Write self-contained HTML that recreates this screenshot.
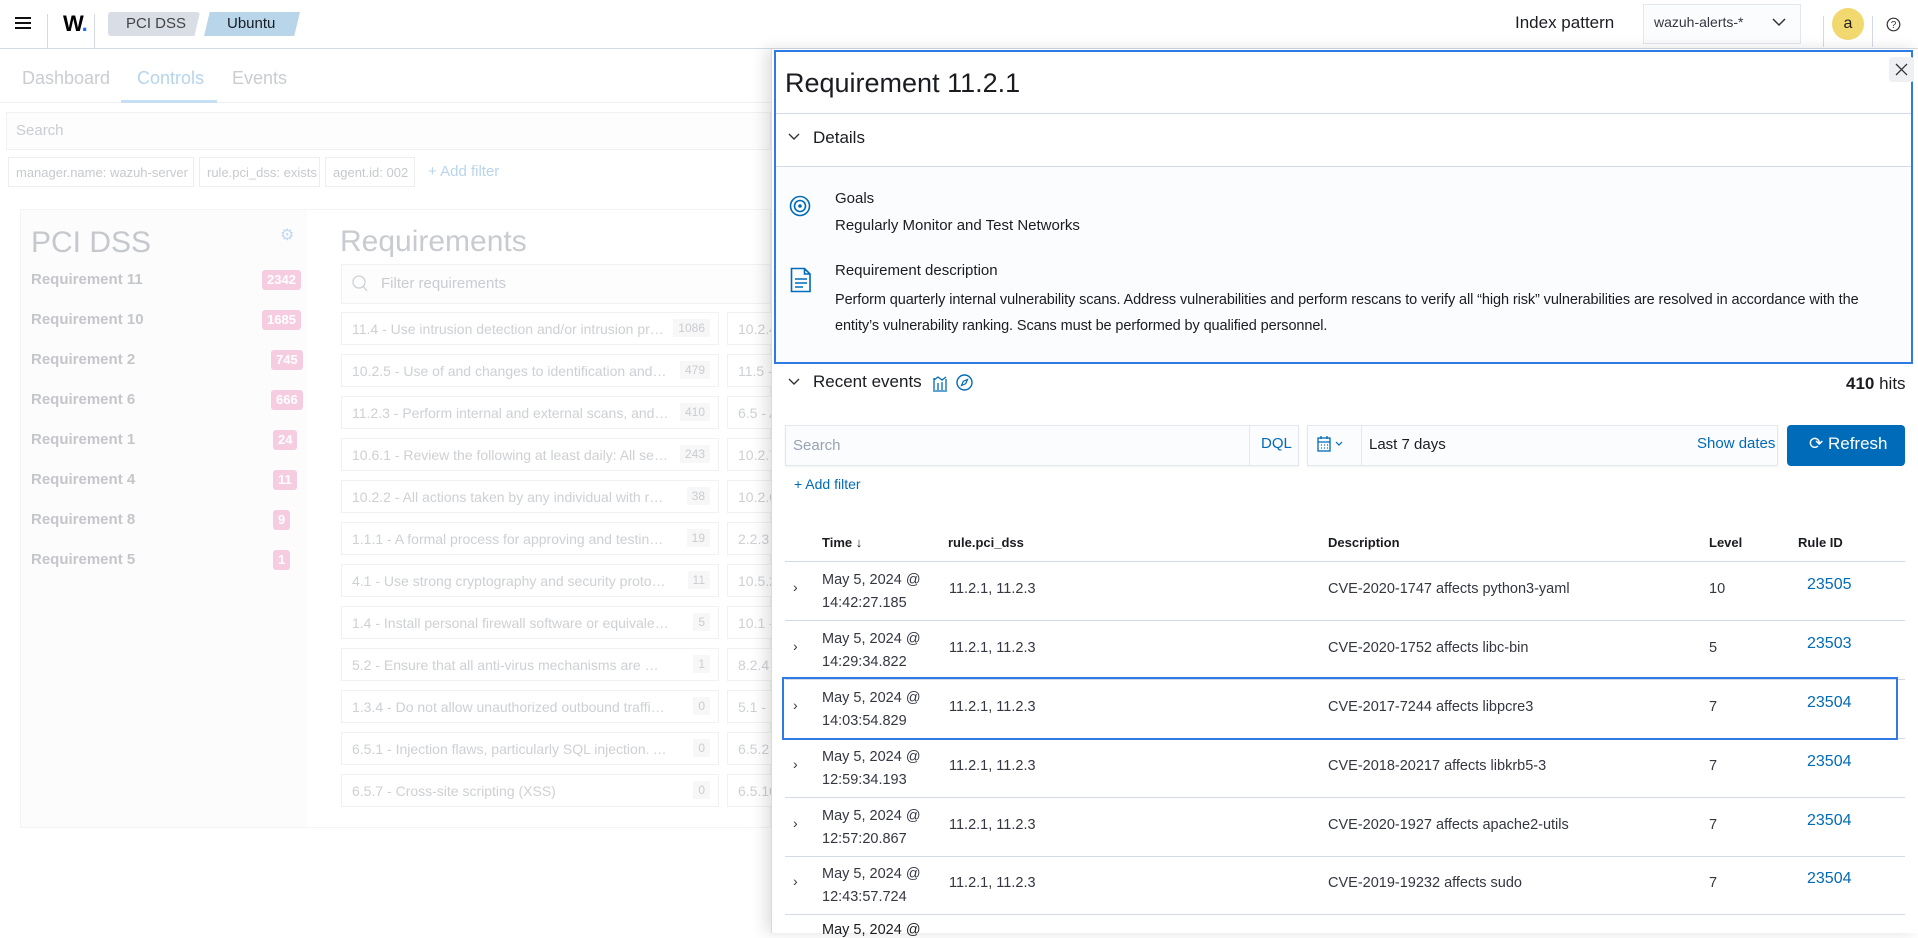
<!DOCTYPE html>
<html><head><meta charset="utf-8"><style>
*{box-sizing:border-box;margin:0;padding:0}
body{width:1918px;height:933px;overflow:hidden;background:#fff;font-family:"Liberation Sans",sans-serif;position:relative;color:#343741}
.a{position:absolute;white-space:nowrap}
.f{color:#c9ccd1}
.pill{position:absolute;border:1px solid #eceef1;height:30px;top:157px;font-size:13px;color:#c6c9ce;padding:7px 7px;background:#fff;white-space:nowrap;overflow:hidden}
.req{position:absolute;left:31px;font-size:15px;font-weight:bold;color:#c4c6ca}
.bdg{position:absolute;right:0;background:#f6cde0;color:#fff;font-size:13px;height:20px;padding:2px 5px;border-radius:3px}
.g{position:absolute;height:33px;border:1px solid #f0f1f3;font-size:14px;color:#cdd0d4;padding:8px 48px 8px 10px;overflow:hidden;background:#fff;white-space:nowrap;text-overflow:ellipsis}
.g b{position:absolute;right:8px;top:6px;font-weight:normal;background:#f7f7f8;font-size:12px;padding:2px 5px;color:#c9ccd0}
.g2{padding-right:4px;text-overflow:clip}
.row{position:absolute;left:785px;width:1120px;height:59px;border-bottom:1px solid #d3dae6;font-size:14.5px;color:#343741}
.row span{position:absolute}
.row .t{left:37px;top:7px;line-height:23px;white-space:normal;width:110px}
.row .c{left:164px;top:19px}
.row .d{left:543px;top:19px}
.row .l{left:924px;top:19px}
.row .r{left:1022px;top:14px;color:#006bb8;font-size:16px}
.row .x{left:8px;top:17px;color:#343741;font-size:14px}
</style></head><body>
<!-- header -->
<div class="a" style="left:0;top:0;width:1918px;height:49px;border-bottom:1px solid #d3dae6"></div>
<div class="a" style="left:15px;top:17px;width:16px;height:2px;background:#111;box-shadow:0 5px 0 #111,0 10px 0 #111"></div>
<div class="a" style="left:47px;top:14px;width:1px;height:35px;background:#d3dae6"></div>
<div class="a" style="left:63px;top:11px;font-size:22px;font-weight:bold;color:#000;letter-spacing:-1px">W<span style="color:#1e6df6">.</span></div>
<div class="a" style="left:94px;top:14px;width:1px;height:35px;background:#d3dae6"></div>
<div class="a" style="left:108px;top:12px;width:92px;height:24px;background:#d9dde6;clip-path:polygon(0 0,100% 0,94% 100%,0 100%);border-radius:3px"></div>
<div class="a" style="left:126px;top:15px;font-size:15px;color:#444">PCI DSS</div>
<div class="a" style="left:204px;top:12px;width:96px;height:24px;background:#b8d5ea;clip-path:polygon(6% 0,100% 0,94% 100%,0 100%)"></div>
<div class="a" style="left:227px;top:15px;font-size:15px;color:#1a1c21">Ubuntu</div>
<div class="a" style="left:1515px;top:13px;font-size:17px;color:#1a1c21">Index pattern</div>
<div class="a" style="left:1643px;top:4px;width:158px;height:40px;border:1px solid #e3e7ee;background:#fbfcfd"></div>
<div class="a" style="left:1654px;top:14px;font-size:14px;color:#343741">wazuh-alerts-*</div>
<svg class="a" style="left:1772px;top:17px" width="14" height="10"><path d="M1 2l6 6 6-6" stroke="#333" fill="none" stroke-width="1.5"/></svg>
<div class="a" style="left:1823px;top:16px;width:1px;height:31px;background:#d3dae6"></div>
<div class="a" style="left:1832px;top:8px;width:32px;height:32px;border-radius:50%;background:#f1d86f;text-align:center;font-size:16px;line-height:31px;color:#222">a</div>
<div class="a" style="left:1872px;top:16px;width:1px;height:31px;background:#d3dae6"></div>
<svg class="a" style="left:1886px;top:17px" width="15" height="15"><circle cx="7.5" cy="7.5" r="6.3" stroke="#333" stroke-width="1.2" fill="none"/><text x="7.5" y="11" font-size="10" text-anchor="middle" fill="#333" font-family="Liberation Sans">?</text></svg>

<!-- faded left -->
<div class="a f" style="left:22px;top:68px;font-size:18px">Dashboard</div>
<div class="a" style="left:137px;top:68px;font-size:18px;color:#b5d4ee">Controls</div>
<div class="a f" style="left:232px;top:68px;font-size:18px">Events</div>
<div class="a" style="left:0;top:102px;width:771px;height:1px;background:#f0f1f3"></div>
<div class="a" style="left:121px;top:100px;width:96px;height:3px;background:#c8def2"></div>
<div class="a" style="left:6px;top:112px;width:765px;height:38px;border:1px solid #f0f1f3;background:#fdfdfe"></div>
<div class="a f" style="left:16px;top:122px;font-size:15px">Search</div>
<div class="pill" style="left:8px;width:186px">manager.name: wazuh-server</div>
<div class="pill" style="left:199px;width:121px">rule.pci_dss: exists</div>
<div class="pill" style="left:325px;width:90px">agent.id: 002</div>
<div class="a" style="left:428px;top:163px;font-size:15px;color:#b9d4ee">+ Add filter</div>
<div class="a" style="left:20px;top:209px;width:751px;height:619px;border:1px solid #f3f4f6;background:#fff"></div>
<div class="a" style="left:21px;top:210px;width:286px;height:617px;background:#fcfcfd"></div>
<div class="a f" style="left:31px;top:226px;font-size:30px;color:#c5c8cc">PCI DSS</div>
<div class="a" style="left:280px;top:225px;font-size:16px;color:#c1d9ef">⚙</div>
<div style="position:absolute;left:0;top:0;width:298px">
<div class="req" style="top:271px">Requirement 11<span class="bdg" style="left:231px;right:auto;top:-1px">2342</span></div>
<div class="req" style="top:311px">Requirement 10<span class="bdg" style="left:231px;right:auto;top:-1px">1685</span></div>
<div class="req" style="top:351px">Requirement 2<span class="bdg" style="left:240px;right:auto;top:-1px">745</span></div>
<div class="req" style="top:391px">Requirement 6<span class="bdg" style="left:240px;right:auto;top:-1px">666</span></div>
<div class="req" style="top:431px">Requirement 1<span class="bdg" style="left:242px;right:auto;top:-1px">24</span></div>
<div class="req" style="top:471px">Requirement 4<span class="bdg" style="left:242px;right:auto;top:-1px">11</span></div>
<div class="req" style="top:511px">Requirement 8<span class="bdg" style="left:242px;right:auto;top:-1px">9</span></div>
<div class="req" style="top:551px">Requirement 5<span class="bdg" style="left:242px;right:auto;top:-1px">1</span></div>
</div>
<div class="a" style="left:340px;top:225px;font-size:30px;color:#c8cbcf">Requirements</div>
<div class="a" style="left:341px;top:264px;width:430px;height:40px;border:1px solid #f0f1f3;background:#fdfdfe"></div>
<svg class="a" style="left:352px;top:275px" width="16" height="18"><circle cx="7" cy="7" r="6" stroke="#cdd0d4" stroke-width="1.3" fill="none"/><path d="M11 11l4 5" stroke="#cdd0d4" stroke-width="1.3"/></svg>
<div class="a f" style="left:381px;top:275px;font-size:15px">Filter requirements</div>
<div class="g" style="left:341px;top:312px;width:378px">11.4 - Use intrusion detection and/or intrusion prevention<b>1086</b></div>
<div class="g" style="left:341px;top:354px;width:378px">10.2.5 - Use of and changes to identification and auth<b>479</b></div>
<div class="g" style="left:341px;top:396px;width:378px">11.2.3 - Perform internal and external scans, and rescan<b>410</b></div>
<div class="g" style="left:341px;top:438px;width:378px">10.6.1 - Review the following at least daily: All security<b>243</b></div>
<div class="g" style="left:341px;top:480px;width:378px">10.2.2 - All actions taken by any individual with root or<b>38</b></div>
<div class="g" style="left:341px;top:522px;width:378px">1.1.1 - A formal process for approving and testing all net<b>19</b></div>
<div class="g" style="left:341px;top:564px;width:378px">4.1 - Use strong cryptography and security protocols to<b>11</b></div>
<div class="g" style="left:341px;top:606px;width:378px">1.4 - Install personal firewall software or equivalent func<b>5</b></div>
<div class="g" style="left:341px;top:648px;width:378px">5.2 - Ensure that all anti-virus mechanisms are maintained<b>1</b></div>
<div class="g" style="left:341px;top:690px;width:378px">1.3.4 - Do not allow unauthorized outbound traffic from<b>0</b></div>
<div class="g" style="left:341px;top:732px;width:378px">6.5.1 - Injection flaws, particularly SQL injection. Also<b>0</b></div>
<div class="g" style="left:341px;top:774px;width:378px">6.5.7 - Cross-site scripting (XSS)<b>0</b></div>
<div class="g g2" style="left:727px;top:312px;width:60px">10.2.4</div>
<div class="g g2" style="left:727px;top:354px;width:60px">11.5 -</div>
<div class="g g2" style="left:727px;top:396px;width:60px">6.5 - A</div>
<div class="g g2" style="left:727px;top:438px;width:60px">10.2.7</div>
<div class="g g2" style="left:727px;top:480px;width:60px">10.2.6</div>
<div class="g g2" style="left:727px;top:522px;width:60px">2.2.3</div>
<div class="g g2" style="left:727px;top:564px;width:60px">10.5.2</div>
<div class="g g2" style="left:727px;top:606px;width:60px">10.1 -</div>
<div class="g g2" style="left:727px;top:648px;width:60px">8.2.4</div>
<div class="g g2" style="left:727px;top:690px;width:60px">5.1 - D</div>
<div class="g g2" style="left:727px;top:732px;width:60px">6.5.2</div>
<div class="g g2" style="left:727px;top:774px;width:60px">6.5.10</div>

<!-- flyout -->
<div class="a" style="left:771px;top:49px;width:1147px;height:884px;background:#fff;border-left:1px solid #d3dae6;box-shadow:-6px 0 14px rgba(0,0,0,.12)"></div>
<div class="a" style="left:774px;top:50px;width:1139px;height:314px;border:2px solid #2f7ae5;background:#fbfcfe"></div>
<div class="a" style="left:776px;top:52px;width:1135px;height:61px;background:#fff"></div>
<div class="a" style="left:785px;top:68px;font-size:27px;color:#1a1c21">Requirement 11.2.1</div>
<div class="a" style="left:1889px;top:57px;width:25px;height:25px;background:#eef0f3;border-radius:3px"></div>
<svg class="a" style="left:1895px;top:63px" width="13" height="13"><path d="M1 1l11 11M12 1L1 12" stroke="#333" stroke-width="1.3"/></svg>
<div class="a" style="left:776px;top:113px;width:1135px;height:1px;background:#d3dae6"></div>
<div class="a" style="left:776px;top:114px;width:1135px;height:52px;background:#fff"></div>
<svg class="a" style="left:788px;top:133px" width="12" height="8"><path d="M1 1l5 5 5-5" stroke="#333" fill="none" stroke-width="1.4"/></svg>
<div class="a" style="left:813px;top:128px;font-size:17px;color:#1a1c21">Details</div>
<div class="a" style="left:776px;top:166px;width:1135px;height:1px;background:#d3dae6"></div>
<svg class="a" style="left:789px;top:195px" width="22" height="22"><circle cx="11" cy="11" r="9.5" stroke="#006bb8" stroke-width="1.6" fill="none"/><circle cx="11" cy="11" r="5.5" stroke="#006bb8" stroke-width="1.6" fill="none"/><circle cx="11" cy="11" r="1.8" fill="#006bb8"/></svg>
<div class="a" style="left:835px;top:190px;font-size:15px;color:#1a1c21">Goals</div>
<div class="a" style="left:835px;top:217px;font-size:15px;color:#1a1c21">Regularly Monitor and Test Networks</div>
<svg class="a" style="left:790px;top:267px" width="22" height="26"><path d="M1.5 1.5h13l5.5 5.5v17.5h-18.5z M14.5 1.5v5.5h5.5" stroke="#006bb8" stroke-width="1.6" fill="none"/><path d="M5 12h12M5 16h12M5 20h8" stroke="#006bb8" stroke-width="1.6"/></svg>
<div class="a" style="left:835px;top:262px;font-size:15px;color:#1a1c21">Requirement description</div>
<div class="a" style="left:835px;top:287px;width:1068px;font-size:14.5px;letter-spacing:-0.1px;line-height:26px;color:#1a1c21;white-space:normal">Perform quarterly internal vulnerability scans. Address vulnerabilities and perform rescans to verify all “high risk” vulnerabilities are resolved in accordance with the entity’s vulnerability ranking. Scans must be performed by qualified personnel.</div>

<svg class="a" style="left:788px;top:378px" width="12" height="8"><path d="M1 1l5 5 5-5" stroke="#333" fill="none" stroke-width="1.4"/></svg>
<div class="a" style="left:813px;top:372px;font-size:17px;color:#1a1c21">Recent events</div>
<svg class="a" style="left:932px;top:374px" width="16" height="18"><path d="M1 17h14M2 16V4M6 16V9M10 16V8M14 16V5M2 6l4-3 4 3 4-3" stroke="#006bb8" stroke-width="1.3" fill="none"/></svg>
<svg class="a" style="left:956px;top:374px" width="17" height="17"><circle cx="8.5" cy="8.5" r="7.5" stroke="#006bb8" stroke-width="1.4" fill="none"/><path d="M11.5 5.5l-1.8 4.2-4.2 1.8 1.8-4.2z" stroke="#006bb8" stroke-width="1.2" fill="none"/></svg>
<div class="a" style="left:1846px;top:374px;font-size:17px;color:#1a1c21"><b>410</b> hits</div>

<div class="a" style="left:785px;top:425px;width:514px;height:41px;border:1px solid #e3e7ee;background:#fbfcfd;box-shadow:0 1px 2px rgba(0,0,0,.06)"></div>
<div class="a" style="left:793px;top:437px;font-size:15px;color:#98a2b3">Search</div>
<div class="a" style="left:1249px;top:426px;width:1px;height:39px;background:#e3e7ee"></div>
<div class="a" style="left:1261px;top:435px;font-size:15px;color:#006bb8">DQL</div>
<div class="a" style="left:1307px;top:425px;width:471px;height:41px;border:1px solid #e3e7ee;background:#fbfcfd;box-shadow:0 1px 2px rgba(0,0,0,.06)"></div>
<svg class="a" style="left:1317px;top:436px" width="30" height="16"><rect x="1" y="2" width="12" height="13" stroke="#006bb8" fill="none" stroke-width="1.3"/><path d="M1 6h12M4 0v3M10 0v3M4 9h1M7 9h1M10 9h1M4 12h1M7 12h1M10 12h1" stroke="#006bb8" stroke-width="1.3"/><path d="M19 6l3 3 3-3" stroke="#006bb8" fill="none" stroke-width="1.2"/></svg>
<div class="a" style="left:1361px;top:426px;width:1px;height:39px;background:#e3e7ee"></div>
<div class="a" style="left:1369px;top:436px;font-size:15px;color:#1a1c21">Last 7 days</div>
<div class="a" style="left:1697px;top:435px;font-size:15px;color:#006bb8">Show dates</div>
<div class="a" style="left:1787px;top:425px;width:118px;height:41px;background:#006bb8;border-radius:4px;color:#fff;font-size:17px;padding:9px 0 0 22px">⟳ Refresh</div>
<div class="a" style="left:794px;top:476px;font-size:14px;color:#006bb8">+ Add filter</div>

<div class="a" style="left:785px;top:532px;width:1120px;height:30px;border-bottom:1px solid #d3dae6"></div>
<div class="a" style="left:822px;top:535px;font-size:13px;font-weight:bold;color:#1a1c21">Time ↓</div>
<div class="a" style="left:948px;top:535px;font-size:13px;font-weight:bold;color:#1a1c21">rule.pci_dss</div>
<div class="a" style="left:1328px;top:535px;font-size:13px;font-weight:bold;color:#1a1c21">Description</div>
<div class="a" style="left:1709px;top:535px;font-size:13px;font-weight:bold;color:#1a1c21">Level</div>
<div class="a" style="left:1798px;top:535px;font-size:13px;font-weight:bold;color:#1a1c21">Rule ID</div>

<div class="row" style="top:562px"><span class="x">›</span><span class="t">May 5, 2024 @ 14:42:27.185</span><span class="c">11.2.1, 11.2.3</span><span class="d">CVE-2020-1747 affects python3-yaml</span><span class="l">10</span><span class="r">23505</span></div>
<div class="row" style="top:621px"><span class="x">›</span><span class="t">May 5, 2024 @ 14:29:34.822</span><span class="c">11.2.1, 11.2.3</span><span class="d">CVE-2020-1752 affects libc-bin</span><span class="l">5</span><span class="r">23503</span></div>
<div class="row" style="top:680px"><span class="x">›</span><span class="t">May 5, 2024 @ 14:03:54.829</span><span class="c">11.2.1, 11.2.3</span><span class="d">CVE-2017-7244 affects libpcre3</span><span class="l">7</span><span class="r">23504</span></div>
<div class="a" style="left:782px;top:677px;width:1116px;height:63px;border:2px solid #2f7ae5"></div>
<div class="row" style="top:739px"><span class="x">›</span><span class="t">May 5, 2024 @ 12:59:34.193</span><span class="c">11.2.1, 11.2.3</span><span class="d">CVE-2018-20217 affects libkrb5-3</span><span class="l">7</span><span class="r">23504</span></div>
<div class="row" style="top:798px"><span class="x">›</span><span class="t">May 5, 2024 @ 12:57:20.867</span><span class="c">11.2.1, 11.2.3</span><span class="d">CVE-2020-1927 affects apache2-utils</span><span class="l">7</span><span class="r">23504</span></div>
<div class="row" style="top:856px"><span class="x">›</span><span class="t">May 5, 2024 @ 12:43:57.724</span><span class="c">11.2.1, 11.2.3</span><span class="d">CVE-2019-19232 affects sudo</span><span class="l">7</span><span class="r">23504</span></div>
<div class="a" style="left:822px;top:922px;font-size:14.5px;color:#1a1c21">May 5, 2024 @</div>
</body></html>
